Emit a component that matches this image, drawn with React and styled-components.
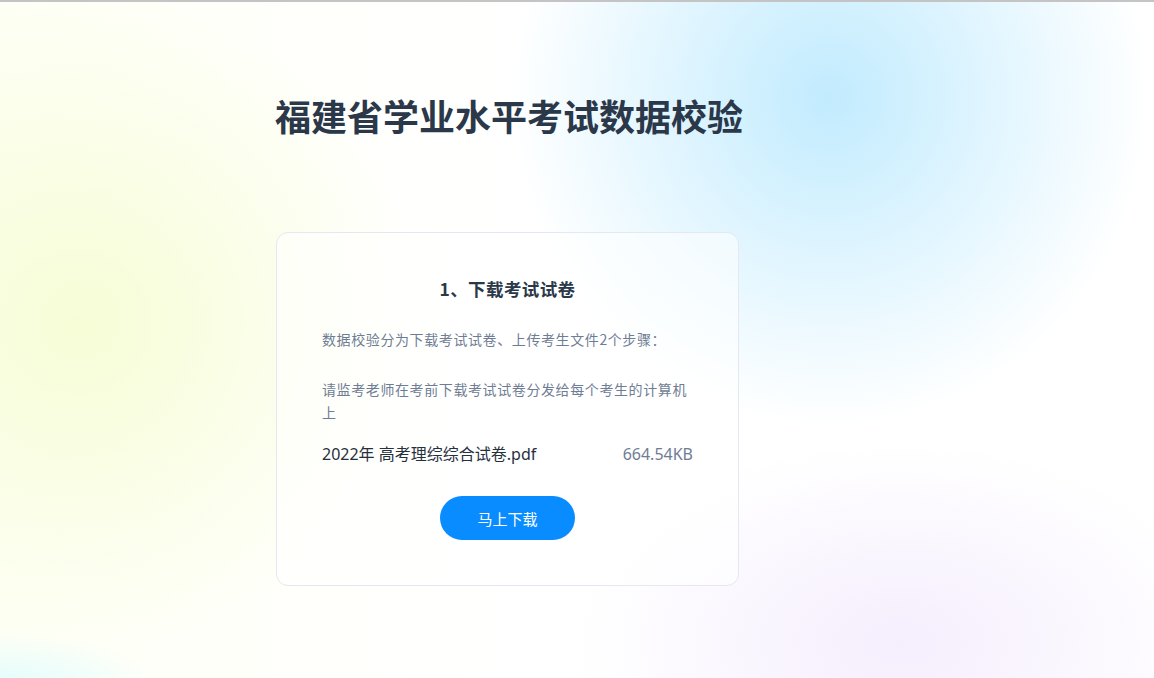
import React from "react";
import styled, { createGlobalStyle } from "styled-components";

const GlobalStyle = createGlobalStyle`
  html, body { margin: 0; padding: 0; }
  body {
    font-family: "Noto Sans", "Noto Sans CJK SC", sans-serif;
    background: #ffffff;
  }
`;

const Page = styled.div`
  min-height: 100vh;
  box-sizing: border-box;
  border-top: 2px solid #c4c4c4;
  overflow: hidden;
  background:
    radial-gradient(ellipse 320px 330px at 830px 95px, rgba(190, 234, 254, 0.95), rgba(190, 234, 254, 0) 100%),
    radial-gradient(ellipse 340px 330px at 80px 320px, rgba(246, 253, 214, 1), rgba(246, 253, 214, 0) 100%),
    radial-gradient(ellipse 330px 200px at 900px 640px, rgba(244, 236, 253, 0.9), rgba(244, 236, 253, 0) 100%),
    radial-gradient(ellipse 160px 60px at 0px 690px, rgba(220, 252, 255, 0.9), rgba(220, 252, 255, 0) 100%),
    linear-gradient(90deg, #fefff5 0%, #ffffff 45%, #ffffff 100%);
`;

const Column = styled.main`
  width: 463px;
  margin-left: 276px;
  padding-top: 91px;
  padding-bottom: 40px;
`;

const Title = styled.h1`
  margin: 0 0 0 -1px;
  font-family: "Noto Sans CJK SC", sans-serif;
  font-size: 36px;
  line-height: 44px;
  font-weight: 700;
  color: #2b3849;
  white-space: nowrap;
`;

const Card = styled.section`
  margin-top: 95px;
  box-sizing: border-box;
  width: 463px;
  border: 1px solid #e3e8f2;
  border-radius: 12px;
  background: rgba(255, 255, 255, 0.55);
  padding: 43px 45px 45px 45px;
  display: flex;
  flex-direction: column;
`;

const CardTitle = styled.h2`
  margin: 0;
  text-align: center;
  font-family: "Noto Sans CJK SC", sans-serif;
  font-size: 17.5px;
  line-height: 26px;
  font-weight: 700;
  color: #2b3849;
  letter-spacing: 0.4px;
`;

const Note = styled.p`
  margin: ${(p) => p.$top}px 0 0 0;
  font-family: "Noto Sans CJK SC", sans-serif;
  font-size: 14px;
  line-height: 23px;
  letter-spacing: 0.6px;
  color: #6f7d94;
`;

const FileRow = styled.div`
  margin-top: 18px;
  display: flex;
  justify-content: space-between;
  align-items: center;
  font-family: "Noto Sans", "Noto Sans CJK SC", sans-serif;
  font-size: 16px;
  line-height: 24px;
`;

const FileName = styled.span`
  color: #26303d;
`;

const FileSize = styled.span`
  color: #6f7d94;
`;

const Actions = styled.div`
  margin-top: 30px;
  display: flex;
  justify-content: center;
`;

const Button = styled.button`
  width: 135px;
  height: 44px;
  border: none;
  border-radius: 22px;
  background: #088cff;
  color: #ffffff;
  font-family: "Noto Sans CJK SC", sans-serif;
  font-size: 15px;
  cursor: pointer;
  padding: 0;
`;

export default function App() {
  return (
    <>
      <GlobalStyle />
      <Page>
        <Column>
          <Title>福建省学业水平考试数据校验</Title>
          <Card>
            <CardTitle>1、下载考试试卷</CardTitle>
            <Note $top={26}>数据校验分为下载考试试卷、上传考生文件2个步骤：</Note>
            <Note $top={27}>请监考老师在考前下载考试试卷分发给每个考生的计算机上</Note>
            <FileRow>
              <FileName>2022年 高考理综综合试卷.pdf</FileName>
              <FileSize>664.54KB</FileSize>
            </FileRow>
            <Actions>
              <Button>马上下载</Button>
            </Actions>
          </Card>
        </Column>
      </Page>
    </>
  );
}
